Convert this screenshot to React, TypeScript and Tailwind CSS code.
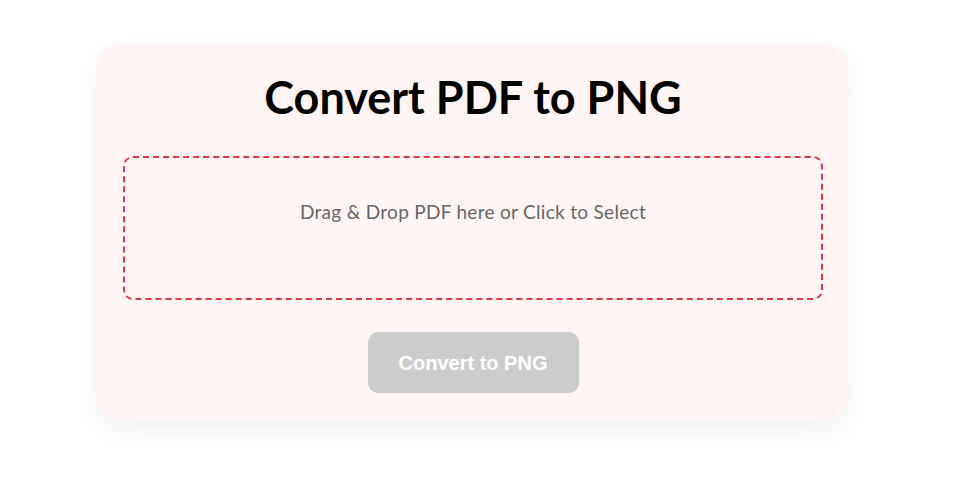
export default function App() {
  return (
    <div className="min-h-screen bg-white pt-[45px]" style={{ fontFamily: "Lato, 'Noto Sans', sans-serif" }}>
      {/* CARD */}
      <div className="ml-[98px] w-[750px] rounded-[20px] bg-[#fff5f5] px-[25px] pt-[13px] pb-[26px] shadow-[0_10px_30px_rgba(0,0,0,0.06)]">
        <h1 className="text-center text-[45px] font-bold leading-[78px] text-black">
          Convert PDF to PNG
        </h1>

        <div className="mt-[20px] h-[144px] rounded-[10px] border-2 border-dashed border-[#dc3545] pt-[40px] text-center">
          <p className="text-[19px] leading-[28px] tracking-[0.3px] text-[#666]">
            Drag &amp; Drop PDF here or Click to Select
          </p>
        </div>

        <div className="mt-[32px] flex justify-center">
          <button
            disabled
            className="h-[61px] w-[211px] rounded-[10px] bg-[#ccc] text-[20px] font-bold text-white"
            style={{ fontFamily: "'Liberation Sans', Arial, sans-serif" }}
          >
            Convert to PNG
          </button>
        </div>
      </div>
    </div>
  );
}
